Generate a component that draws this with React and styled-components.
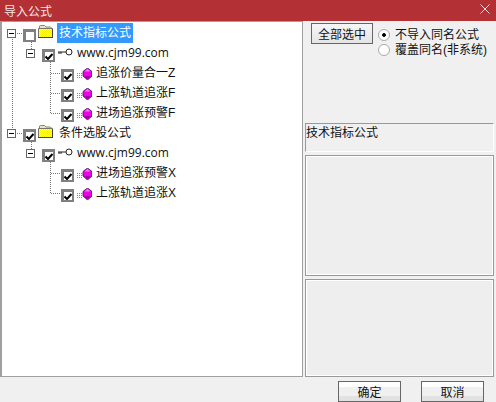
import React from 'react'
import styled, { createGlobalStyle } from 'styled-components'

const GlobalStyle = createGlobalStyle`
  html, body { margin: 0; padding: 0; background: #f0f0f0; }
  body { font-family: "Liberation Sans", "Noto Sans CJK SC", sans-serif; font-size: 12px; color: #111; }
  * { box-sizing: border-box; }
`

function Folder({ id }) {
  return (
    <FolderIcon width="15" height="13" viewBox="0 0 15 13">
      <defs>
        <pattern id={id} width="2" height="2" patternUnits="userSpaceOnUse">
          <rect width="2" height="2" fill="#fff000" />
          <rect width="1" height="1" fill="#fff8b0" />
          <rect x="1" y="1" width="1" height="1" fill="#fff8b0" />
        </pattern>
      </defs>
      <path d="M1.5 3V1L2.5 .5H6.5L8 2H12.5L13.5 3" fill="#e8e4c8" stroke="#8a8468" />
      <path d="M.5 12.5V3.5H14.5V12.5Z" fill={`url(#${id})`} stroke="#77756a" />
      <path d="M0 12.5H15M14.5 4V13" stroke="#444" />
    </FolderIcon>
  )
}

function Key() {
  return (
    <IconSvg width="15" height="8" viewBox="0 0 15 8">
      <circle cx="11" cy="4" r="3" fill="#fff" stroke="#222" />
      <path d="M0 4H8M1 4V6M3 4V6" stroke="#222" fill="none" />
    </IconSvg>
  )
}

function Gem() {
  return (
    <IconSvg width="15" height="12" viewBox="0 0 15 12">
      <path d="M0 5.5H5M0 7.5H5M0 9.5H5" stroke="#888" strokeDasharray="1 1" />
      <path d="M10.5 0L15 3.5V8L10.5 12L6 8V3.5Z" fill="#f000e8" stroke="#3a1050" strokeWidth=".8" />
      <path d="M10.5 .8L13.5 3.5H7.5Z" fill="#ff70ff" />
      <path d="M10.5 11.2L7 8H14Z" fill="#a000a0" />
    </IconSvg>
  )
}

function TreeItem({ level, checked, selected, icon, expander, latin, children }) {
  return (
    <Row $level={level}>
      {expander && <Expander />}
      <Check>
        {checked && (
          <svg width="8" height="7" viewBox="0 0 8 7">
            <path d="M.5 3.5L3 6L7.5 1" fill="none" stroke="#000" strokeWidth="2" />
          </svg>
        )}
      </Check>
      {icon}
      <Label $selected={selected} $latin={latin} $level={level}>{children}</Label>
    </Row>
  )
}

export default function App() {
  return (
    <Window>
      <GlobalStyle />
      <TitleBar>
        <span>导入公式</span>
        <CloseIcon width="10" height="10" viewBox="0 0 10 10">
          <path d="M.5 .5L9.5 9.5M9.5 .5L.5 9.5" stroke="#f4dcdc" />
        </CloseIcon>
      </TitleBar>
      <Main>
        <TreePanel>
          <TreeLines width="300" height="200" viewBox="0 0 300 200">
            <path
              d="M10.5 15V107M15 11.5H22M29.5 20V27M48.5 40V91M49 51.5H60M49 71.5H60M49 91.5H60M15 111.5H22M29.5 120V127M48.5 140V171M49 151.5H60M49 171.5H60"
              stroke="#777"
              strokeDasharray="1 1"
              fill="none"
            />
          </TreeLines>
          <TreeItem level={0} expander icon={<Folder id="dither-a" />} selected>技术指标公式</TreeItem>
          <TreeItem level={1} expander checked icon={<Key />} latin>www.cjm99.com</TreeItem>
          <TreeItem level={2} checked icon={<Gem />}>追涨价量合一Z</TreeItem>
          <TreeItem level={2} checked icon={<Gem />}>上涨轨道追涨F</TreeItem>
          <TreeItem level={2} checked icon={<Gem />}>进场追涨预警F</TreeItem>
          <TreeItem level={0} expander checked icon={<Folder id="dither-b" />}>条件选股公式</TreeItem>
          <TreeItem level={1} expander checked icon={<Key />} latin>www.cjm99.com</TreeItem>
          <TreeItem level={2} checked icon={<Gem />}>进场追涨预警X</TreeItem>
          <TreeItem level={2} checked icon={<Gem />}>上涨轨道追涨X</TreeItem>
        </TreePanel>
        <SidePanel>
          <Controls>
            <SelectAll>全部选中</SelectAll>
            <RadioGroup>
              <RadioRow><Radio $on />不导入同名公式</RadioRow>
              <RadioRow><Radio />覆盖同名(非系统)</RadioRow>
            </RadioGroup>
          </Controls>
          <InfoBox>技术指标公式</InfoBox>
          <SunkenBox $height={121} />
          <SunkenBox $height={98} />
        </SidePanel>
      </Main>
      <Footer>
        <DialogButton>确定</DialogButton>
        <DialogButton>取消</DialogButton>
      </Footer>
    </Window>
  )
}

const Window = styled.div`
  width: 496px;
  height: 402px;
  overflow: hidden;
  background: #f0f0f0;
  display: flex;
  flex-direction: column;
`

const TitleBar = styled.div`
  height: 21px;
  flex: none;
  background: #b33035;
  color: #f6e6e6;
  font-size: 12px;
  padding: 0 6px 0 4px;
  display: flex;
  align-items: center;
  justify-content: space-between;
`

const CloseIcon = styled.svg`
  margin-bottom: 4px;
`

const Main = styled.div`
  height: 356px;
  flex: none;
  display: flex;
`

const TreePanel = styled.div`
  position: relative;
  width: 303px;
  flex: none;
  background: #fff;
  border: 1px solid #a0a0a0;
  border-width: 1px 1px 1px 2px;
  padding-top: 1px;
`

const TreeLines = styled.svg`
  position: absolute;
  left: 0;
  top: 0;
`

const Row = styled.div`
  position: relative;
  height: 20px;
  display: flex;
  align-items: flex-start;
  padding-left: ${p => [5, 24, 59][p.$level]}px;
`

const Expander = styled.span`
  flex: none;
  position: relative;
  width: 9px;
  height: 9px;
  margin: 6px 7px 0 0;
  background: #fff;
  border: 1px solid #666;
  &::after {
    content: '';
    position: absolute;
    left: 1px;
    top: 3px;
    width: 5px;
    height: 1px;
    background: #000;
  }
`

const Check = styled.span`
  flex: none;
  width: 13px;
  height: 13px;
  margin-top: 6px;
  background: #fff;
  border: solid #808080;
  border-width: 3px 2px 2px 3px;
  display: flex;
  align-items: center;
  justify-content: center;
`

const FolderIcon = styled.svg`
  flex: none;
  margin: 2px 0 0 2px;
`

const IconSvg = styled.svg`
  flex: none;
  margin: 5px 0 0 3px;
`

const Label = styled.span`
  height: 20px;
  line-height: ${p => (p.$latin ? 19 : 21)}px;
  margin-left: ${p => (p.$level === 0 ? 4 : 2)}px;
  padding: 0 2px;
  white-space: nowrap;
  background: ${p => (p.$selected ? '#3399ff' : 'transparent')};
  color: ${p => (p.$selected ? '#fff' : '#111')};
  font-family: ${p => (p.$latin ? '"Open Sans", sans-serif' : 'inherit')};
`

const SidePanel = styled.div`
  flex: none;
  width: 193px;
  padding: 2px 2px 0 2px;
  display: flex;
  flex-direction: column;
`

const Controls = styled.div`
  height: 100px;
  flex: none;
  padding-left: 6px;
  display: flex;
  gap: 5px;
`

const SelectAll = styled.div`
  width: 62px;
  height: 21px;
  flex: none;
  border: 1px solid #666;
  background: linear-gradient(#f6f6f6, #e4e4e4);
  display: flex;
  align-items: center;
  justify-content: center;
`

const RadioGroup = styled.div`
  display: flex;
  flex-direction: column;
  padding-top: 4px;
`

const RadioRow = styled.div`
  height: 15.5px;
  line-height: 16px;
  display: flex;
  align-items: center;
  gap: 5px;
  white-space: nowrap;
`

const Radio = styled.span`
  width: 12px;
  height: 12px;
  flex: none;
  border-radius: 50%;
  background: ${p => (p.$on ? 'radial-gradient(circle, #000 1.5px, #fff 2.2px)' : '#fff')};
  border: 1px solid #aaa;
`

const InfoBox = styled.div`
  height: 29px;
  flex: none;
  border-style: solid;
  border-width: 1px;
  border-color: #999 #fff #fff #999;
  padding-top: 1px;
  line-height: 17px;
`

const SunkenBox = styled.div`
  flex: none;
  height: ${p => p.$height}px;
  margin-top: 3px;
  border: 1px solid #999;
  box-shadow: inset 0 0 0 1px #fff;
  background: #eeeeee;
`

const Footer = styled.div`
  flex: 1;
  display: flex;
  justify-content: flex-end;
  gap: 20px;
  padding: 4px 12px 0 0;
`

const DialogButton = styled.div`
  width: 63px;
  height: 21px;
  border: 1px solid #666;
  background: linear-gradient(#fff 0 25%, #f0f0f0 25% 72%, #e2e2e2 72%);
  display: flex;
  align-items: center;
  justify-content: center;
`
